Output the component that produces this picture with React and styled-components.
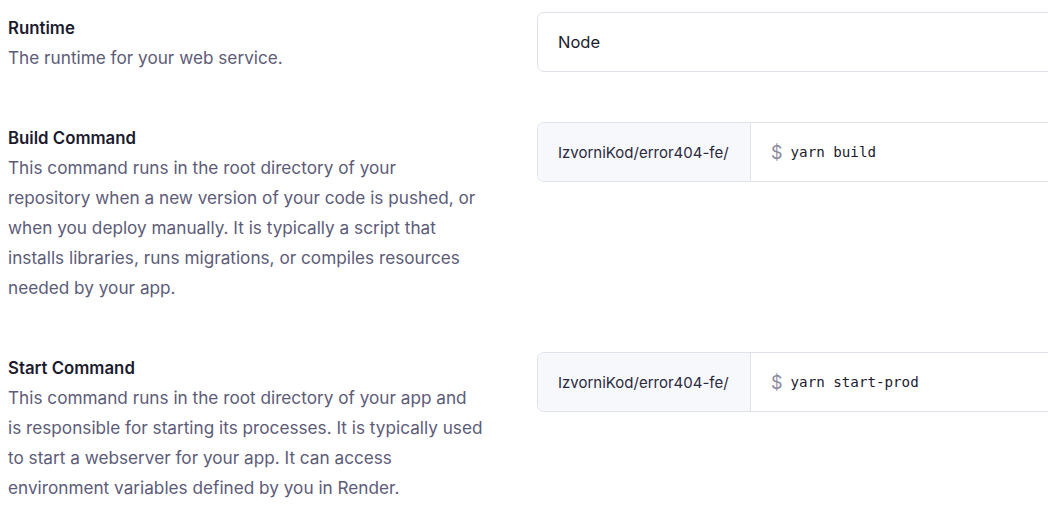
import React from 'react';
import styled, { createGlobalStyle } from 'styled-components';

const GlobalStyle = createGlobalStyle`
  body {
    margin: 0;
    background: #fff;
    font-family: Inter, "Noto Sans", sans-serif;
    overflow: hidden;
  }
`;

const Page = styled.div`
  display: flex;
  flex-direction: column;
  gap: 50px;
  padding: 12px 0 0 8px;
  width: 1200px;
`;

const Row = styled.div`
  display: grid;
  grid-template-columns: 485px 640px;
  column-gap: 44px;
  align-items: start;
`;

const Info = styled.div``;

const Title = styled.div`
  font-size: 16.8px;
  font-weight: 600;
  line-height: 30px;
  padding-top: 1px;
  color: #1c1b2e;
`;

const Desc = styled.div`
  font-size: 17.2px;
  line-height: 30px;
  margin-bottom: -1px;
  color: #5d5c78;
  white-space: nowrap;
`;

const Field = styled.div`
  display: flex;
  height: 60px;
  box-sizing: border-box;
  border: 1px solid #dfe2ea;
  border-radius: 7px;
  overflow: hidden;
  background: #fff;
`;

const Prefix = styled.div`
  display: flex;
  align-items: center;
  padding: 0 20px;
  background: #f7f8fc;
  border-right: 1px solid #dfe2ea;
  font-size: 15px;
  color: #2a2a3c;
  width: 213px;
  box-sizing: border-box;
`;

const Value = styled.div`
  display: flex;
  align-items: center;
  padding: 0 20px;
  font-size: 16.5px;
  color: #1c1b2e;
`;

const Dollar = styled.span`
  color: #8a8a9c;
  font-size: 18px;
  margin-right: 8px;
`;

const Code = styled.span`
  font-family: "DejaVu Sans Mono", "Liberation Mono", monospace;
  font-size: 14.2px;
  color: #1c1b2e;
`;

const Setting = ({ title, children, field }) => (
  <Row>
    <Info>
      <Title>{title}</Title>
      <Desc>{children}</Desc>
    </Info>
    {field}
  </Row>
);

const CommandField = ({ cmd }) => (
  <Field>
    <Prefix>IzvorniKod/error404-fe/</Prefix>
    <Value>
      <Dollar>$</Dollar>
      <Code>{cmd}</Code>
    </Value>
  </Field>
);

export default function App() {
  return (
    <>
      <GlobalStyle />
      <Page>
        <Setting
          title="Runtime"
          field={
            <Field>
              <Value>Node</Value>
            </Field>
          }
        >
          The runtime for your web service.
        </Setting>
        <Setting title="Build Command" field={<CommandField cmd="yarn build" />}>
          This command runs in the root directory of your
          <br />
          repository when a new version of your code is pushed, or
          <br />
          when you deploy manually. It is typically a script that
          <br />
          installs libraries, runs migrations, or compiles resources
          <br />
          needed by your app.
        </Setting>
        <Setting title="Start Command" field={<CommandField cmd="yarn start-prod" />}>
          This command runs in the root directory of your app and
          <br />
          is responsible for starting its processes. It is typically used
          <br />
          to start a webserver for your app. It can access
          <br />
          environment variables defined by you in Render.
        </Setting>
      </Page>
    </>
  );
}
